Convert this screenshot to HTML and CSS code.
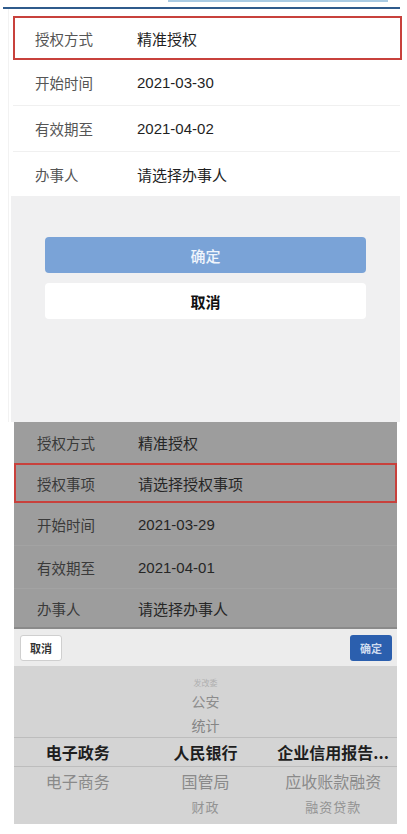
FILE: index.html
```html
<!DOCTYPE html>
<html lang="zh-CN">
<head>
<meta charset="UTF-8">
<meta name="viewport" content="width=device-width, initial-scale=1.0">
<title>授权设置</title>
<link rel="stylesheet" href="styles.css">
</head>
<body>
	<div class="top-strip"></div>
	<div class="top-line"></div>

	<!-- 第一张截图：授权表单 -->
	<div class="shot shot-form">
		<div class="form-list">
			<div class="row mark"><span class="label">授权方式</span><span class="value">精准授权</span></div>
			<div class="row"><span class="label">开始时间</span><span class="value">2021-03-30</span></div>
			<div class="row"><span class="label">有效期至</span><span class="value">2021-04-02</span></div>
			<div class="row last"><span class="label">办事人</span><span class="value">请选择办事人</span></div>
		</div>
		<div class="action-area">
			<button class="btn btn-ok">确定</button>
			<button class="btn btn-cancel">取消</button>
		</div>
	</div>

	<!-- 第二张截图：选择授权事项 -->
	<div class="shot shot-picker">
		<div class="dim-list">
			<div class="drow first"><span class="label">授权方式</span><span class="value">精准授权</span></div>
			<div class="drow mark"><span class="label">授权事项</span><span class="value">请选择授权事项</span></div>
			<div class="drow"><span class="label">开始时间</span><span class="value">2021-03-29</span></div>
			<div class="drow"><span class="label">有效期至</span><span class="value">2021-04-01</span></div>
			<div class="drow last"><span class="label">办事人</span><span class="value">请选择办事人</span></div>
		</div>
		<div class="toolbar">
			<button class="tb-btn tb-cancel">取消</button>
			<button class="tb-btn tb-ok">确定</button>
		</div>
		<div class="wheel">
			<div class="wrow far"><span></span><span>发改委</span><span></span></div>
			<div class="wrow near2"><span></span><span>公安</span><span></span></div>
			<div class="wrow near1"><span></span><span>统计</span><span></span></div>
			<div class="wrow current"><span>电子政务</span><span>人民银行</span><span>企业信用报告...</span></div>
			<div class="wrow next1"><span>电子商务</span><span>国管局</span><span>应收账款融资</span></div>
			<div class="wrow next2"><span></span><span>财政</span><span>融资贷款</span></div>
		</div>
	</div>
</body>
</html>
```

FILE: styles.css
```css
body {
	margin: 0;
	background: #fff;
	font-family: "Noto Sans CJK SC", "Noto Sans", sans-serif;
	width: 407px;
	height: 834px;
	overflow: hidden;
}
/* 顶部的两条线 */
.top-strip {
	margin-left: 168px;
	width: 220px;
	height: 2px;
	background: #a9cbe4;
}
.top-line {
	margin: 5px 7px 0 3px;
	height: 2px;
	background: #2f5b8c;
}
.shot-form {
	margin-left: 8px;
	width: 392px;
	border-left: 1px solid #f2f2f2;
	box-sizing: border-box;
}
.form-list {
	padding-top: 7px;
	background: #fff;
}
.row {
	display: flex;
	align-items: center;
	height: 45px;
	margin-left: 4px;
	border-bottom: 1px solid #f0f0f0;
	font-size: 14.5px;
}
.row.last {
	border-bottom: none;
	height: 44px;
}
.row.mark {
	height: 44px;
	margin-right: -2px;
	border: 2px solid #c8413c;
	box-sizing: border-box;
}
.row .label {
	width: 102px;
	padding-left: 22px;
	color: #555;
}
.row.mark .label {
	padding-left: 20px;
}
.row .value, .drow .value {
	font-family: "Liberation Sans", "Noto Sans CJK SC", sans-serif;
	font-size: 15px;
	color: #1f1f1f;
}
.action-area {
	height: 226px;
	margin-left: 2px;
	background: #f0f0f1;
	padding: 41px 34px 0 34px;
	box-sizing: border-box;
	display: flex;
	flex-direction: column;
	gap: 10px;
}
.btn {
	height: 36px;
	border: none;
	border-radius: 4px;
	font-family: inherit;
	font-size: 15px;
	font-weight: 500;
}
.btn-ok {
	background: #7aa3d7;
	color: #f0f5fc;
}
.btn-cancel {
	background: #fff;
	color: #111;
	font-weight: bold;
}

/* 第二张截图 */
.shot-picker {
	margin-left: 14px;
	width: 383px;
}
.dim-list {
	background: #9d9d9d;
}
.drow {
	display: flex;
	align-items: center;
	height: 43px;
	border-bottom: 1px solid #a3a3a3;
	font-size: 14.5px;
	box-sizing: border-box;
}
.drow.first {
	height: 41px;
	border-bottom: none;
}
.drow.mark {
	height: 40px;
	border: 2px solid #c8413c;
}
.drow.last {
	height: 40px;
	border-bottom: 2px solid #8a8a8a;
}
.drow .label {
	width: 101px;
	padding-left: 23px;
	color: #3a3a3a;
}
.drow.mark .label {
	padding-left: 21px;
}
.drow .value {
	color: #262626;
}
.toolbar {
	height: 37px;
	background: #ececec;
	display: flex;
	justify-content: space-between;
	align-items: center;
	padding: 0 5px 0 6px;
}
.tb-btn {
	height: 26px;
	width: 42px;
	border-radius: 3px;
	font-family: inherit;
	font-size: 11px;
	font-weight: bold;
	padding: 0;
}
.tb-cancel {
	background: #fff;
	border: 1px solid #cfcfcf;
	color: #333;
}
.tb-ok {
	background: #2b5fae;
	border: none;
	color: #cfdcef;
}
.wheel {
	height: 158px;
	background: #d4d4d4;
	padding-top: 8px;
	box-sizing: border-box;
}
.wrow {
	display: grid;
	grid-template-columns: 1fr 1fr 1fr;
	align-items: center;
	text-align: center;
	color: #8c8c8c;
}
.wrow.far {
	height: 16px;
	font-size: 8px;
	color: #b0b0b0;
}
.wrow.near2 {
	height: 22px;
	font-size: 14px;
}
.wrow.near1 {
	height: 25px;
	font-size: 14px;
	color: #858585;
}
.wrow.current {
	height: 30px;
	border-top: 1px solid #bdbdbd;
	border-bottom: 1px solid #bdbdbd;
	font-size: 16px;
	font-weight: bold;
	color: #1e1e1e;
	box-sizing: border-box;
}
.wrow.next1 {
	height: 28px;
	font-size: 16px;
	color: #8a8a8a;
}
.wrow.next2 {
	height: 22px;
	font-size: 13px;
	color: #939393;
	letter-spacing: 1px;
}
```
